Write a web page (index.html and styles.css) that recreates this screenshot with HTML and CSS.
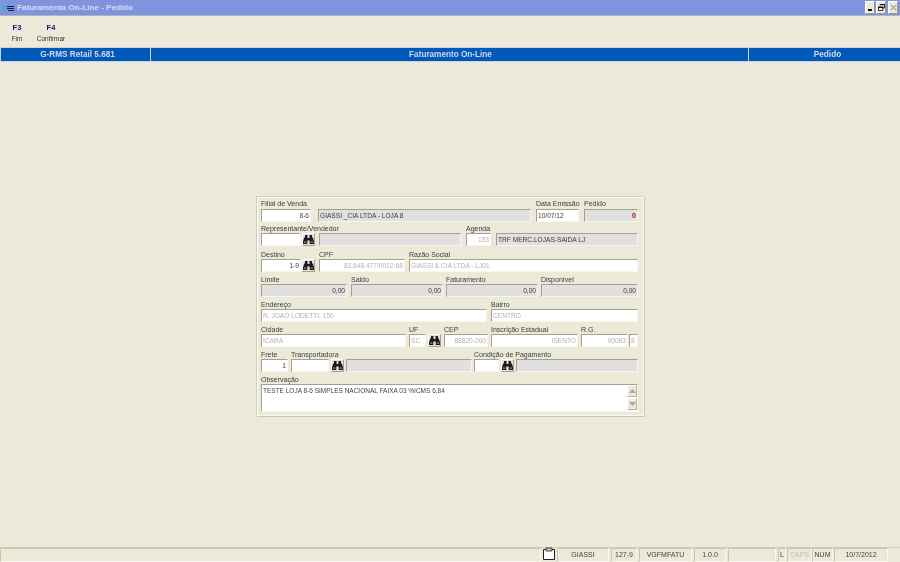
FILE: index.html
```html
<!DOCTYPE html>
<html lang="pt">
<head>
<meta charset="utf-8">
<title>Faturamento On-Line - Pedido</title>
<link rel="stylesheet" href="styles.css">
</head>
<body>
<svg class="defs" width="0" height="0" aria-hidden="true">
  <symbol id="bino" viewBox="0 0 11 9">
    <path d="M2 0h2.500v3h2V0H9v2l1 1 1 3.500V9H6.700V5.500H4.300V9H0V6.500L1 3l1-1z" fill="#1a1a22"/>
    <path d="M1 6.500h2.400v1.200H1zM7.700 6.500h2.400v1.200H7.700z" fill="#8d8d96"/>
  </symbol>
</svg>
<div class="app">
  <header class="titlebar">
    <svg class="logo" width="13" height="8" viewBox="0 0 13 8" aria-hidden="true">
      <path d="M1 3l2-2 2 2-2 3z" fill="#19c2c2"/>
      <path d="M5 2h7v1H5zM5 4h7v1H5zM6 6h6v1H6z" fill="#14203c"/>
    </svg>
    <span class="title">Faturamento On-Line - Pedido</span>
    <div class="winbtns">
      <span class="winbtn"><svg width="7" height="7" viewBox="0 0 7 7" aria-hidden="true"><path d="M1 5h4v2H1z" fill="#111"/></svg></span>
      <span class="winbtn"><svg width="8" height="8" viewBox="0 0 8 8" aria-hidden="true"><path d="M2.500.5h5v4h-2M.5 3.500h5v4h-5z" fill="none" stroke="#111"/><path d="M2 0h6v1.500H2zM0 3h6v1.500H0z" fill="#111"/></svg></span>
      <span class="winbtn winclose"><svg width="8" height="8" viewBox="0 0 8 8" aria-hidden="true"><path d="M1 1l6 6M7 1L1 7" stroke="#a5a598" stroke-width="1.600"/></svg></span>
    </div>
  </header>

  <nav class="toolbar">
    <div class="tool tool-f3"><b>F3</b><span>Fim</span></div>
    <div class="tool tool-f4"><b>F4</b><span>Confirmar</span></div>
  </nav>

  <div class="bluebar">
    <div class="seg seg-a">G-RMS Retail 5.681</div>
    <div class="seg seg-b">Faturamento On-Line</div>
    <div class="seg seg-c">Pedido</div>
  </div>

  <main class="main">
    <form class="panel">
      <div class="row r1">
        <div class="cell w50"><label>Filial de Venda</label><div class="field in right">8-6</div></div>
        <div class="cell w213 ml7"><label>&nbsp;</label><div class="field off dark">GIASSI _CIA LTDA - LOJA 8</div></div>
        <div class="cell w43 ml5"><label>Data Emissão</label><div class="field in dark">10/07/12</div></div>
        <div class="cell w54 ml5"><label>Pedido</label><div class="field off right red">0</div></div>
      </div>
      <div class="row r2">
        <div class="cell w40"><label>Representante/Vendedor</label><div class="field in"></div></div>
        <button type="button" class="bino ml1"><svg width="11" height="9"><use href="#bino"/></svg></button>
        <div class="cell w142 ml4"><div class="field off"></div></div>
        <div class="cell w25 ml5"><label>Agenda</label><div class="field in right grey">153</div></div>
        <div class="cell w142 ml5"><div class="field off dark">TRF MERC.LOJAS-SAIDA LJ</div></div>
      </div>
      <div class="row r3">
        <div class="cell w40"><label>Destino</label><div class="field in right">1-9</div></div>
        <button type="button" class="bino ml1"><svg width="11" height="9"><use href="#bino"/></svg></button>
        <div class="cell w86 ml4"><label>CPF</label><div class="field in right grey">83.648.477/0012-68</div></div>
        <div class="cell w229 ml4"><label>Razão Social</label><div class="field in grey">GIASSI &amp; CIA LTDA - LJ01</div></div>
      </div>
      <div class="row">
        <div class="cell w86"><label>Limite</label><div class="field off right dark">0,00</div></div>
        <div class="cell w92 ml4"><label>Saldo</label><div class="field off right dark">0,00</div></div>
        <div class="cell w92 ml3"><label>Faturamento</label><div class="field off right dark">0,00</div></div>
        <div class="cell w97 ml3"><label>Disponível</label><div class="field off right dark">0,00</div></div>
      </div>
      <div class="row">
        <div class="cell w226"><label>Endereço</label><div class="field in grey">R. JOAO LODETTI, 150</div></div>
        <div class="cell w147 ml4"><label>Bairro</label><div class="field in grey">CENTRO</div></div>
      </div>
      <div class="row">
        <div class="cell w145"><label>Cidade</label><div class="field in grey">ICARA</div></div>
        <div class="cell w17 ml3"><label>UF</label><div class="field in grey">SC</div></div>
        <button type="button" class="bino ml2"><svg width="11" height="9"><use href="#bino"/></svg></button>
        <div class="cell w44 ml3"><label>CEP</label><div class="field in right grey">88820-000</div></div>
        <div class="cell w87 ml3"><label>Inscrição Estadual</label><div class="field in right grey">ISENTO</div></div>
        <div class="cell w47 ml3"><label>R.G.</label><div class="field in right grey">00063</div></div>
        <div class="cell w9 ml1"><label>&nbsp;</label><div class="field in grey">8</div></div>
      </div>
      <div class="row">
        <div class="cell w27"><label>Frete</label><div class="field in right dark">1</div></div>
        <div class="cell w38 ml3"><label>Transportadora</label><div class="field in"></div></div>
        <button type="button" class="bino ml2"><svg width="11" height="9"><use href="#bino"/></svg></button>
        <div class="cell w126 ml2"><div class="field off"></div></div>
        <div class="cell w25 ml2"><label>Condição de Pagamento</label><div class="field in"></div></div>
        <button type="button" class="bino ml2"><svg width="11" height="9"><use href="#bino"/></svg></button>
        <div class="cell w122 ml2"><div class="field off"></div></div>
      </div>
      <div class="row r-memo">
        <div class="cell w377">
          <label>Observação</label>
          <div class="memo">
            <div class="memo-text">TESTE LOJA 8-6 SIMPLES NACIONAL FAIXA 03 %ICMS 6,84</div>
            <div class="scroll">
              <span class="sbtn"><svg width="7" height="4" viewBox="0 0 7 4" aria-hidden="true"><path d="M3.500 0L7 4H0z" fill="#a8a89c"/></svg></span>
              <span class="sbtn"><svg width="7" height="4" viewBox="0 0 7 4" aria-hidden="true"><path d="M0 0h7L3.500 4z" fill="#a8a89c"/></svg></span>
            </div>
          </div>
        </div>
      </div>
    </form>
  </main>

  <footer class="status">
    <div class="st st-main"></div>
    <div class="st-icon"><svg width="12" height="13" viewBox="0 0 12 13" aria-hidden="true"><path d="M.5 2.500h11v10H.5z" fill="#fff" stroke="#222"/><path d="M3 1h6v3H3z" fill="#c9c6b4" stroke="#222" stroke-width=".8"/></svg></div>
    <div class="st s52">GIASSI</div>
    <div class="st s26 ml2">127-9</div>
    <div class="st s53 ml2">VGFMFATU</div>
    <div class="st s32 ml2">1.0.0</div>
    <div class="st s48 ml2"></div>
    <div class="st s8 ml2 dark">L</div>
    <div class="st s25 ml1 caps">CAPS</div>
    <div class="st s21 dark">NUM</div>
    <div class="st s54 ml1">10/7/2012</div>
    <div class="st-end"></div>
  </footer>
</div>
</body>
</html>
```
FILE: styles.css
```css
* { box-sizing: border-box; }
html, body { margin: 0; padding: 0; height: 100%; }
body {
  background: #ece9d8;
  font-family: "Liberation Sans", Arial, sans-serif;
  font-size: 7px;
  color: #333;
  overflow: hidden;
}
.defs { position: absolute; }
.app { display: flex; flex-direction: column; height: 562px; filter: blur(0.3px); }

/* title bar */
.titlebar {
  height: 16px;
  flex: none;
  display: flex;
  align-items: center;
  background: #7f93df;
  border-bottom: 1px solid #b4b4b4;
  padding: 0 2px;
}
.logo { flex: none; }
.title { margin-left: 2px; font-size: 8.100px; font-weight: bold; color: #d5dcf6; white-space: nowrap; }
.winbtns { margin-left: auto; display: flex; gap: 1px; }
.winbtn {
  width: 10px; height: 13px;
  background: #ece9d8;
  border: 1px solid; border-color: #fff #9c9a8a #9c9a8a #fff;
  display: flex; align-items: center; justify-content: center;
}
.winclose { margin-left: 1px; }
.winbtn svg { width: 7px; height: 7px; }

/* toolbar */
.toolbar { height: 31px; flex: none; display: flex; padding-top: 7px; }
.tool { display: flex; flex-direction: column; align-items: center; font-size: 6.500px; color: #333; }
.tool b { font-size: 7.500px; color: #14147a; line-height: 9px; margin-bottom: 2px; }
.tool span { line-height: 9px; }
.tool-f3 { width: 34px; }
.tool-f4 { width: 34px; }

/* blue bar */
.bluebar {
  height: 15px; flex: none;
  display: flex;
  background: #0058b8;
  border-top: 1px solid #c8d4e0;
  border-bottom: 1px solid #c8d4e0;
  color: #cfdaf0;
  font-size: 8.200px;
  font-weight: bold;
}
.seg { display: flex; align-items: center; justify-content: center; height: 100%; }
.seg-a { width: 151px; padding-left: 4px; border-left: 1px solid #c8d4e0; border-right: 1px solid #c8d4e0; }
.seg-b { width: 598px; padding-left: 2px; border-right: 1px solid #c8d4e0; }
.seg-c { flex: 1; padding-left: 6px; }

/* form */
.main { flex: 1; display: flex; justify-content: center; align-items: flex-start; padding-top: 134px; }
.panel {
  width: 388px; height: 220px;
  background: #ece9d8;
  border: 1px solid #d0cdbb;
  border-right-color: #f8f7f0;
  border-bottom-color: #f8f7f0;
  box-shadow: 1px 1px 0 #c8c5b2, inset 1px 1px 0 #fff;
  padding: 0 4px;
}
.row { display: flex; align-items: flex-end; height: 25px; }
.r2 { height: 24px; }
.r3 { height: 26px; }
.r-memo { height: 40px; }
.cell { flex: none; display: flex; flex-direction: column; min-width: 0; }
.cell label { display: block; height: 12px; line-height: 15px; white-space: nowrap; color: #3c3c3c; }
.r1 .cell label { line-height: 14px; }
.field {
  height: 13px;
  line-height: 11px;
  padding: 0 1px;
  font-size: 6.600px;
  border: 1px solid;
  border-color: #a3a18f #f7f6ef #f7f6ef #a3a18f;
  white-space: nowrap;
  overflow: hidden;
  color: #444;
}
.in { background: #fff; }
.off { background: #e0e0e0; }
.right { text-align: right; }
.grey { color: #b0b0b0; }
.dark { color: #3a3a3a; }
.red { color: #9a0f1c; font-weight: bold; font-size: 7px; }

.bino {
  flex: none;
  width: 13px; height: 13px;
  padding: 0;
  background: #e4e1d0;
  border: 1px solid; border-color: #fff #a3a18f #a3a18f #fff;
  display: flex; align-items: center; justify-content: center;
}

.memo {
  height: 28px;
  background: #fff;
  border: 1px solid; border-color: #a3a18f #f7f6ef #f7f6ef #a3a18f;
  display: flex;
}
.memo-text { flex: 1; padding: 1px 1px; font-size: 6.500px; line-height: 10px; color: #444; white-space: nowrap; }
.scroll { width: 10px; display: flex; flex-direction: column; justify-content: space-between; margin: 0 0 1px; }
.sbtn {
  height: 12px;
  background: #ece9d8;
  border: 1px solid; border-color: #fff #b4b2a0 #b4b2a0 #fff;
  display: flex; align-items: center; justify-content: center;
}

/* widths */
.w9 { width: 9px; } .w17 { width: 17px; } .w25 { width: 25px; } .w27 { width: 27px; }
.w38 { width: 38px; } .w40 { width: 40px; } .w43 { width: 43px; } .w44 { width: 44px; }
.w47 { width: 47px; } .w50 { width: 50px; } .w54 { width: 54px; } .w86 { width: 86px; }
.w87 { width: 87px; } .w92 { width: 92px; } .w97 { width: 97px; } .w122 { width: 122px; }
.w126 { width: 126px; } .w142 { width: 142px; } .w145 { width: 145px; } .w147 { width: 147px; }
.w213 { width: 213px; } .w226 { width: 226px; } .w229 { width: 229px; } .w377 { width: 377px; }
.ml1 { margin-left: 1px; } .ml2 { margin-left: 2px; } .ml3 { margin-left: 3px; } .ml4 { margin-left: 4px; }
.ml5 { margin-left: 5px; } .ml7 { margin-left: 7px; }

/* status bar */
.status {
  height: 15px; flex: none;
  display: flex;
  align-items: stretch;
  border-top: 1px solid #d0cdbb;
  text-align: center;
}
.st {
  flex: none;
  border: 1px solid; border-color: #c8c5b2 #f8f7f0 #f8f7f0 #c8c5b2;
  line-height: 12px;
  color: #444;
}
.st-main { width: 541px; }
.st-icon { width: 16px; flex: none; display: flex; align-items: flex-start; justify-content: center; padding-top: 0; }
.st-icon svg { margin-top: -1px; }
.st-end { flex: 1; }
.s8 { width: 8px; } .s21 { width: 21px; } .s25 { width: 25px; } .s26 { width: 26px; } .s32 { width: 32px; }
.s48 { width: 48px; } .s52 { width: 52px; } .s53 { width: 53px; } .s54 { width: 54px; }
.caps { color: #bdbdb0; }
```
